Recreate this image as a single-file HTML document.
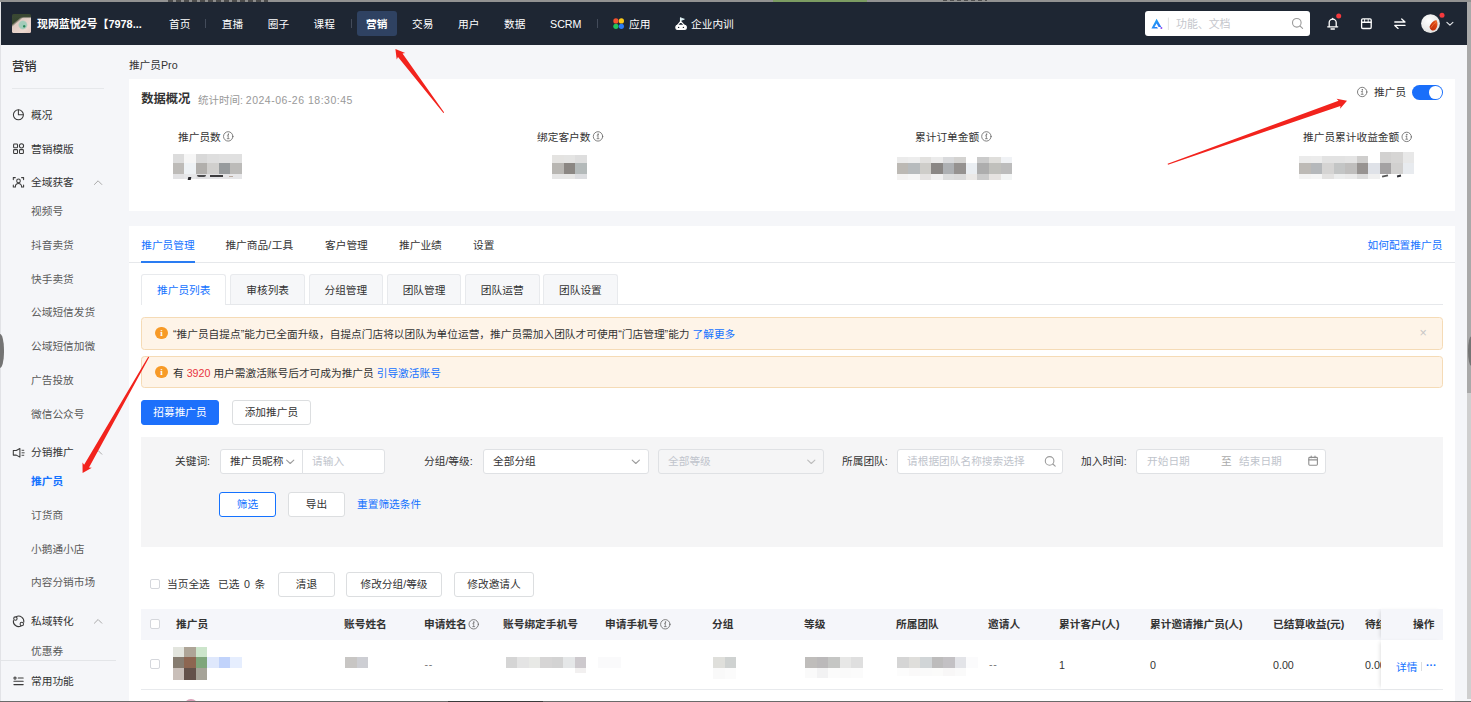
<!DOCTYPE html>
<html lang="zh-CN">
<head>
<meta charset="utf-8">
<title>推广员Pro</title>
<style>
*{box-sizing:border-box;margin:0;padding:0}
html,body{width:1471px;height:702px;overflow:hidden}
body{position:relative;background:#f5f6f9;font-family:"Liberation Sans","Noto Sans CJK SC",sans-serif;font-size:10.7px;color:#333;line-height:1}
.abs{position:absolute}
.t{position:absolute;white-space:nowrap;line-height:14px;height:14px}
/* outer frame */
#frameTop{left:0;top:0;width:1471px;height:2.4px;background:#929292}
#frameBot{left:0;top:700.5px;width:1471px;height:2px;background:#6a6a6a}
#frameR1{left:1467px;top:2px;width:4px;height:391px;background:#a9a9a9}
#frameR2{left:1467px;top:393px;width:4px;height:306px;background:#cfcfcf}
#frameL{left:0;top:2px;width:1.1px;height:699px;background:#e2e3e7}
.knob{border-radius:50%;background:#747474}
/* header */
#hdr{left:1px;top:2px;width:1466px;height:42.7px;background:#1e2633}
#hdr .t{color:#fff;top:14.5px}
.vdiv{position:absolute;top:16.8px;width:1px;height:9px;background:#434b5a}
#act{left:356px;top:9.4px;width:40px;height:24.4px;border-radius:3px;background:#2f4262}
#search{left:1144px;top:9px;width:165px;height:25px;border-radius:3px;background:#fff}
/* sidebar */
#side .t{left:31px;color:#5a5a5a}
#side .t.h{color:#333}
#side .t.blue,.btn.blue,.stab.blue{color:#1472ff}
/* cards */
.card{position:absolute;background:#fff}
.blue,.btn.blue,.stab.blue{color:#1472ff}
.lbl{color:#333}
.inp{position:absolute;height:24.4px;background:#fff;border:1px solid #dfe1e4;border-radius:3px}
.ph{color:#c0c4cc}
.btn{position:absolute;height:24.6px;border:1px solid #dcdee0;border-radius:3px;background:#fff;text-align:center;line-height:23px;color:#333}
.stab{position:absolute;top:274.4px;height:30px;width:74.7px;background:#f6f7f9;border:1px solid #e8eaed;border-bottom:none;border-radius:3px 3px 0 0;text-align:center;line-height:30px;color:#333}
.alert{position:absolute;left:141.2px;width:1301.8px;height:32.4px;background:#fef4e8;border:1px solid #f5dbb6;border-radius:3.5px}
.ico-w{position:absolute;width:12.4px;height:12.4px;border-radius:50%;background:#f79a27;color:#fff;font-size:9px;font-weight:bold;text-align:center;line-height:12.4px;font-family:"Liberation Serif",serif}
.cb{position:absolute;width:10px;height:10px;border:1px solid #d5d7dc;border-radius:2px;background:#fff}
.th{font-weight:bold;color:#333}
.mz{position:absolute}
</style>
</head>
<body>

<!-- ===== HEADER ===== -->
<div id="hdr" class="abs">
  <div class="abs" id="logo" style="left:10.9px;top:11.9px;width:19.2px;height:19.2px;border-radius:1.5px;background:radial-gradient(circle at 12.2px 12.3px,#23804f 0,#2a8556 0.7px,rgba(42,133,86,0) 1.7px),radial-gradient(circle at 10.9px 11px,#9fcbb8 0,#a5cdbb 3.6px,rgba(165,205,187,0) 4.9px),linear-gradient(180deg,#39472f 0,#3a4834 13%,rgba(58,72,52,0) 24%),linear-gradient(140deg,#3b4936 0%,#37462f 29%,#dfcbc2 38%,#ecd9d1 75%,#e2c6bd 100%)"></div>
  <div class="t" style="left:36px;font-weight:bold;font-size:10.9px">现网蓝悦2号【7978...</div>
  <div class="t" style="left:168px">首页</div>
  <div class="vdiv" style="left:204.4px"></div>
  <div class="t" style="left:220.7px">直播</div>
  <div class="t" style="left:266.7px">圈子</div>
  <div class="t" style="left:312.5px">课程</div>
  <div class="vdiv" style="left:349.5px"></div>
  <div class="abs" id="act"></div>
  <div class="t" style="left:365px;font-weight:bold">营销</div>
  <div class="t" style="left:411px">交易</div>
  <div class="t" style="left:457px">用户</div>
  <div class="t" style="left:503px">数据</div>
  <div class="t" style="left:549px">SCRM</div>
  <div class="vdiv" style="left:595.5px"></div>
  <div class="t" style="left:628px">应用</div>
  <div class="t" style="left:690px">企业内训</div>
  <div class="abs" id="search"></div>
  <div class="t" style="left:1175px;top:14.5px;color:#c4c6cc;font-size:10.9px">功能、文档</div>
</div>

<!-- ===== SIDEBAR ===== -->
<div id="side">
  <div class="t h" style="left:12px;top:59.4px;font-size:12.3px;font-weight:500;line-height:16px;height:16px">营销</div>
  <div class="abs" style="left:12px;top:88px;width:92px;height:1px;background:#e6e8eb"></div>
  <div class="t h" style="top:108px">概况</div>
  <div class="t h" style="top:142px">营销模版</div>
  <div class="t h" style="top:175px">全域获客</div>
  <div class="t" style="top:204px">视频号</div>
  <div class="t" style="top:238px">抖音卖货</div>
  <div class="t" style="top:272px">快手卖货</div>
  <div class="t" style="top:305px">公域短信发货</div>
  <div class="t" style="top:339px">公域短信加微</div>
  <div class="t" style="top:373px">广告投放</div>
  <div class="t" style="top:407px">微信公众号</div>
  <div class="t h" style="top:445px">分销推广</div>
  <div class="t blue" style="top:474px;font-weight:bold">推广员</div>
  <div class="t" style="top:508px">订货商</div>
  <div class="t" style="top:542px">小鹅通小店</div>
  <div class="t" style="top:575px">内容分销市场</div>
  <div class="t h" style="top:614px">私域转化</div>
  <div class="t" style="top:643.7px">优惠券</div>
  <div class="abs" style="left:0;top:659.6px;width:116px;height:43px;background:#f5f6f9;border-top:1px solid #e3e5e8"></div>
  <div class="t h" style="top:674px">常用功能</div>
</div>

<!-- ===== MAIN ===== -->
<div class="t" style="left:128.9px;top:58px;color:#333">推广员Pro</div>

<div class="card" id="card1" style="left:129.2px;top:78.7px;width:1325.8px;height:131.9px"></div>
<div class="t" style="left:141.2px;top:92.4px;font-size:12.3px;font-weight:bold;color:#333">数据概况</div>
<div class="t" style="left:198px;top:92.8px;color:#999;font-size:10.5px">统计时间: <span style="letter-spacing:.5px">2024-06-26 18:30:45</span></div>
<div class="t" style="left:178px;top:129.6px">推广员数</div>
<div class="t" style="left:537px;top:129.6px">绑定客户数</div>
<div class="t" style="left:915px;top:129.6px">累计订单金额</div>
<div class="t" style="left:1303px;top:129.6px">推广员累计收益金额</div>
<div class="t" style="left:1374px;top:85.4px;color:#333">推广员</div>
<div class="abs" id="sw" style="left:1412px;top:84.8px;width:31.2px;height:15.4px;border-radius:8px;background:#1a6ffa"><div class="abs" style="right:1.5px;top:1.4px;width:12.6px;height:12.6px;border-radius:50%;background:#fff"></div></div>

<div class="card" id="card2" style="left:129.2px;top:225.9px;width:1325.8px;height:476px"></div>
<div class="abs" style="left:129.2px;top:262px;width:1325.8px;height:1px;background:#e6e8eb"></div>
<div class="t blue" style="left:141.2px;top:237.6px">推广员管理</div>
<div class="abs" style="left:141.2px;top:261px;width:53.8px;height:2px;background:#2a7cf2"></div>
<div class="t" style="left:225.4px;top:237.6px">推广商品<span style="letter-spacing:.6px">/</span>工具</div>
<div class="t" style="left:325px;top:237.6px">客户管理</div>
<div class="t" style="left:399px;top:237.6px">推广业绩</div>
<div class="t" style="left:473px;top:237.6px">设置</div>
<div class="t blue" style="left:1367.5px;top:237.5px">如何配置推广员</div>

<div class="abs" style="left:141.2px;top:304px;width:1301.8px;height:1px;background:#e6e8eb"></div>
<div class="stab blue" style="left:141.2px;width:85.2px;background:#fff;height:31px">推广员列表</div>
<div class="stab" style="left:230.3px">审核列表</div>
<div class="stab" style="left:308.5px">分组管理</div>
<div class="stab" style="left:386.7px">团队管理</div>
<div class="stab" style="left:464.9px">团队运营</div>
<div class="stab" style="left:543.1px">团队设置</div>

<div class="alert" style="top:317.2px;height:32.6px"></div>
<div class="ico-w" style="left:155.4px;top:326.8px">i</div>
<div class="t" style="left:173px;top:327px">“推广员自提点”能力已全面升级，自提点门店将以团队为单位运营，推广员需加入团队才可使用“门店管理”能力 <span class="blue">了解更多</span></div>
<div class="t" style="left:1419.6px;top:326px;color:#c6c6c6;font-size:12.5px">×</div>
<div class="alert" style="top:356px"></div>
<div class="ico-w" style="left:155.4px;top:365.6px">i</div>
<div class="t" style="left:173px;top:366px">有 <span style="color:#e8353e">3920</span> 用户需激活账号后才可成为推广员 <span class="blue">引导激活账号</span></div>

<div class="btn" style="left:141.2px;top:400px;width:77.6px;background:#1d70fb;border-color:#1d70fb;color:#fff">招募推广员</div>
<div class="btn" style="left:231.8px;top:400px;width:79.2px">添加推广员</div>

<div class="abs" id="filter" style="left:141.2px;top:436.8px;width:1301.8px;height:110.4px;background:#f5f5f6"></div>
<div class="t lbl" style="left:175px;top:454px">关键词:</div>
<div class="inp" style="left:219.6px;top:449.4px;width:83px;border-radius:3px 0 0 3px"></div>
<div class="t" style="left:230px;top:454px">推广员昵称</div>
<div class="inp" style="left:302px;top:449.4px;width:83px;border-radius:0 3px 3px 0"></div>
<div class="t ph" style="left:312px;top:454px">请输入</div>
<div class="t lbl" style="left:424px;top:454px">分组/等级:</div>
<div class="inp" style="left:483px;top:449.4px;width:166px"></div>
<div class="t" style="left:493px;top:454px">全部分组</div>
<div class="inp" style="left:658px;top:449.4px;width:166px;background:#f5f5f6"></div>
<div class="t ph" style="left:668px;top:454px">全部等级</div>
<div class="t lbl" style="left:842px;top:454px">所属团队:</div>
<div class="inp" style="left:897px;top:449.4px;width:166px"></div>
<div class="t ph" style="left:907px;top:454px">请根据团队名称搜索选择</div>
<div class="t lbl" style="left:1081px;top:454px">加入时间:</div>
<div class="inp" style="left:1136px;top:449.4px;width:190px"></div>
<div class="t ph" style="left:1147px;top:454px">开始日期</div>
<div class="t ph" style="left:1221px;top:454px;color:#aaa">至</div>
<div class="t ph" style="left:1239px;top:454px">结束日期</div>

<div class="btn blue" style="left:219px;top:492px;width:57px;border-color:#1472ff">筛选</div>
<div class="btn" style="left:288px;top:492px;width:57px">导出</div>
<div class="t blue" style="left:357px;top:497px">重置筛选条件</div>

<div class="cb" style="left:150px;top:579px"></div>
<div class="t" style="left:167px;top:577px">当页全选</div>
<div class="t" style="left:218px;top:577px;word-spacing:1.6px">已选 0 条</div>
<div class="btn" style="left:278px;top:572px;width:57px">清退</div>
<div class="btn" style="left:346px;top:572px;width:96px">修改分组/等级</div>
<div class="btn" style="left:454px;top:572px;width:80px">修改邀请人</div>

<div class="abs" id="thead" style="left:141.2px;top:608.6px;width:1301.8px;height:31.4px;background:#f5f6fa"></div>
<div class="cb" style="left:150px;top:619px"></div>
<div class="t th" style="left:176px;top:617px">推广员</div>
<div class="t th" style="left:344px;top:617px">账号姓名</div>
<div class="t th" style="left:424px;top:617px">申请姓名</div>
<div class="t th" style="left:503px;top:617px">账号绑定手机号</div>
<div class="t th" style="left:605px;top:617px">申请手机号</div>
<div class="t th" style="left:712px;top:617px">分组</div>
<div class="t th" style="left:804px;top:617px">等级</div>
<div class="t th" style="left:896px;top:617px">所属团队</div>
<div class="t th" style="left:988px;top:617px">邀请人</div>
<div class="t th" style="left:1059px;top:617px">累计客户(人)</div>
<div class="t th" style="left:1150px;top:617px">累计邀请推广员(人)</div>
<div class="t th" style="left:1273px;top:617px">已结算收益(元)</div>
<div class="t th" style="left:1365px;top:617px">待结</div>
<div class="abs" style="left:141.2px;top:688.8px;width:1301.8px;height:1px;background:#e8eaed"></div>
<div class="cb" style="left:150px;top:659px"></div>
<div class="t" style="left:424.5px;top:656.6px;color:#777;letter-spacing:.8px">--</div>
<div class="t" style="left:989px;top:656.6px;color:#777;letter-spacing:.8px">--</div>
<div class="t" style="left:1059px;top:657.6px">1</div>
<div class="t" style="left:1150px;top:657.6px">0</div>
<div class="t" style="left:1273px;top:657.6px">0.00</div>
<div class="t" style="left:1365px;top:657.6px">0.00</div>
<!-- fixed col -->
<div class="abs" style="left:1381px;top:609px;width:62px;height:31px;background:#f5f6fa;box-shadow:-3px 0 4px -2px rgba(0,0,0,.12)"></div>
<div class="abs" style="left:1381px;top:640px;width:62px;height:49px;background:#fff;box-shadow:-3px 0 4px -2px rgba(0,0,0,.12)"></div>
<div class="t th" style="left:1413px;top:617px">操作</div>
<div class="t blue" style="left:1396px;top:660px">详情</div>
<div class="abs" style="left:1421px;top:662px;width:1px;height:9px;background:#dcdee0"></div>
<div class="t blue" style="left:1426px;top:658px;font-weight:bold">···</div>

<i class="mz" style="left:172.8px;top:154.2px;width:11.7px;height:8.8px;background:#dcdcdc"></i>
<i class="mz" style="left:184.3px;top:154.2px;width:11.7px;height:8.8px;background:#f6f6f6"></i>
<i class="mz" style="left:195.7px;top:154.2px;width:11.7px;height:8.8px;background:#d8d8d8"></i>
<i class="mz" style="left:207.2px;top:154.2px;width:11.7px;height:8.8px;background:#dedede"></i>
<i class="mz" style="left:218.7px;top:154.2px;width:11.7px;height:8.8px;background:#e0e0e0"></i>
<i class="mz" style="left:230.2px;top:154.2px;width:11.7px;height:8.8px;background:#e0e0e0"></i>
<i class="mz" style="left:172.8px;top:162.8px;width:11.7px;height:11.6px;background:#bdbbb8"></i>
<i class="mz" style="left:184.3px;top:162.8px;width:11.7px;height:11.6px;background:#eef2f5"></i>
<i class="mz" style="left:195.7px;top:162.8px;width:11.7px;height:11.6px;background:#b1afac"></i>
<i class="mz" style="left:207.2px;top:162.8px;width:11.7px;height:11.6px;background:#d0cfcd"></i>
<i class="mz" style="left:218.7px;top:162.8px;width:11.7px;height:11.6px;background:#979b9d"></i>
<i class="mz" style="left:230.2px;top:162.8px;width:11.7px;height:11.6px;background:#bcbbb9"></i>
<i class="mz" style="left:172.8px;top:174.2px;width:11.7px;height:4.5px;background:#e2e2e4"></i>
<i class="mz" style="left:184.3px;top:174.2px;width:11.7px;height:4.5px;background:#e6e7e9"></i>
<i class="mz" style="left:195.7px;top:174.2px;width:11.7px;height:4.5px;background:#e0e0e2"></i>
<i class="mz" style="left:207.2px;top:174.2px;width:11.7px;height:4.5px;background:#e2e2e4"></i>
<i class="mz" style="left:218.7px;top:174.2px;width:11.7px;height:4.5px;background:#e4e4e6"></i>
<i class="mz" style="left:230.2px;top:174.2px;width:11.7px;height:4.5px;background:#e6e6e8"></i>
<i class="mz" style="left:552.1px;top:154.6px;width:11.7px;height:8.4px;background:#e4e3e1"></i>
<i class="mz" style="left:563.6px;top:154.6px;width:11.7px;height:8.4px;background:#e4e4e3"></i>
<i class="mz" style="left:575.1px;top:154.6px;width:11.7px;height:8.4px;background:#dedede"></i>
<i class="mz" style="left:552.1px;top:162.8px;width:11.7px;height:11.2px;background:#b8b6b2"></i>
<i class="mz" style="left:563.6px;top:162.8px;width:11.7px;height:11.2px;background:#8b8783"></i>
<i class="mz" style="left:575.1px;top:162.8px;width:11.7px;height:11.2px;background:#b4baba"></i>
<i class="mz" style="left:552.1px;top:173.8px;width:11.7px;height:5.2px;background:#e6e6e6"></i>
<i class="mz" style="left:563.6px;top:173.8px;width:11.7px;height:5.2px;background:#e6e6e5"></i>
<i class="mz" style="left:575.1px;top:173.8px;width:11.7px;height:5.2px;background:#dcdde0"></i>
<i class="mz" style="left:896.8px;top:157.3px;width:11.7px;height:5.5px;background:#ebebeb"></i>
<i class="mz" style="left:908.3px;top:157.3px;width:11.7px;height:5.5px;background:#ededed"></i>
<i class="mz" style="left:919.8px;top:157.3px;width:11.7px;height:5.5px;background:#e2e1df"></i>
<i class="mz" style="left:931.4px;top:157.3px;width:11.7px;height:5.5px;background:#ebebeb"></i>
<i class="mz" style="left:942.9px;top:157.3px;width:11.7px;height:5.5px;background:#d9dadc"></i>
<i class="mz" style="left:954.4px;top:157.3px;width:11.7px;height:5.5px;background:#d4d3d1"></i>
<i class="mz" style="left:977.4px;top:157.3px;width:11.7px;height:5.5px;background:#cbcbcb"></i>
<i class="mz" style="left:989.0px;top:157.3px;width:11.7px;height:5.5px;background:#dfdedb"></i>
<i class="mz" style="left:1000.5px;top:157.3px;width:11.7px;height:5.5px;background:#f0f2f5"></i>
<i class="mz" style="left:896.8px;top:162.6px;width:11.7px;height:11.2px;background:#bcb9b4"></i>
<i class="mz" style="left:908.3px;top:162.6px;width:11.7px;height:11.2px;background:#b7bbbd"></i>
<i class="mz" style="left:919.8px;top:162.6px;width:11.7px;height:11.2px;background:#cecdc9"></i>
<i class="mz" style="left:931.4px;top:162.6px;width:11.7px;height:11.2px;background:#8a8785"></i>
<i class="mz" style="left:942.9px;top:162.6px;width:11.7px;height:11.2px;background:#adb0b3"></i>
<i class="mz" style="left:954.4px;top:162.6px;width:11.7px;height:11.2px;background:#959290"></i>
<i class="mz" style="left:965.9px;top:162.6px;width:11.7px;height:11.2px;background:#eaeef2"></i>
<i class="mz" style="left:977.4px;top:162.6px;width:11.7px;height:11.2px;background:#adadad"></i>
<i class="mz" style="left:989.0px;top:162.6px;width:11.7px;height:11.2px;background:#c0c0bc"></i>
<i class="mz" style="left:1000.5px;top:162.6px;width:11.7px;height:11.2px;background:#bcbcbc"></i>
<i class="mz" style="left:896.8px;top:173.6px;width:11.7px;height:6.9px;background:#f4f3f2"></i>
<i class="mz" style="left:908.3px;top:173.6px;width:11.7px;height:6.9px;background:#f6f6f6"></i>
<i class="mz" style="left:919.8px;top:173.6px;width:11.7px;height:6.9px;background:#e5e3e2"></i>
<i class="mz" style="left:931.4px;top:173.6px;width:11.7px;height:6.9px;background:#f0f0f0"></i>
<i class="mz" style="left:942.9px;top:173.6px;width:11.7px;height:6.9px;background:#dcdddd"></i>
<i class="mz" style="left:954.4px;top:173.6px;width:11.7px;height:6.9px;background:#dadada"></i>
<i class="mz" style="left:965.9px;top:173.6px;width:11.7px;height:6.9px;background:#ebe9e7"></i>
<i class="mz" style="left:977.4px;top:173.6px;width:11.7px;height:6.9px;background:#cbcbcb"></i>
<i class="mz" style="left:989.0px;top:173.6px;width:11.7px;height:6.9px;background:#e6e3e1"></i>
<i class="mz" style="left:1000.5px;top:173.6px;width:11.7px;height:6.9px;background:#f3f5f5"></i>
<i class="mz" style="left:1299.2px;top:155.8px;width:11.7px;height:7.0px;background:#ebebeb"></i>
<i class="mz" style="left:1310.7px;top:155.8px;width:11.7px;height:7.0px;background:#ececec"></i>
<i class="mz" style="left:1322.2px;top:155.8px;width:11.7px;height:7.0px;background:#e2e2e2"></i>
<i class="mz" style="left:1333.7px;top:155.8px;width:11.7px;height:7.0px;background:#e2e2e2"></i>
<i class="mz" style="left:1345.2px;top:155.8px;width:11.7px;height:7.0px;background:#e4e4e4"></i>
<i class="mz" style="left:1356.7px;top:155.8px;width:11.7px;height:7.0px;background:#cfcecd"></i>
<i class="mz" style="left:1299.2px;top:162.6px;width:11.7px;height:11.2px;background:#bdbab6"></i>
<i class="mz" style="left:1310.7px;top:162.6px;width:11.7px;height:11.2px;background:#b5b8bb"></i>
<i class="mz" style="left:1322.2px;top:162.6px;width:11.7px;height:11.2px;background:#d5d4d3"></i>
<i class="mz" style="left:1333.7px;top:162.6px;width:11.7px;height:11.2px;background:#c3c5c5"></i>
<i class="mz" style="left:1345.2px;top:162.6px;width:11.7px;height:11.2px;background:#bfbebd"></i>
<i class="mz" style="left:1356.7px;top:162.6px;width:11.7px;height:11.2px;background:#979391"></i>
<i class="mz" style="left:1368.2px;top:162.6px;width:11.7px;height:11.2px;background:#dfe2e8"></i>
<i class="mz" style="left:1379.7px;top:162.6px;width:11.7px;height:11.2px;background:#a4a2a3"></i>
<i class="mz" style="left:1391.2px;top:162.6px;width:11.7px;height:11.2px;background:#d1d0cf"></i>
<i class="mz" style="left:1402.7px;top:162.6px;width:11.7px;height:11.2px;background:#e8ebef"></i>
<i class="mz" style="left:1299.2px;top:173.6px;width:11.7px;height:5.3px;background:#f3f3f3"></i>
<i class="mz" style="left:1310.7px;top:173.6px;width:11.7px;height:5.3px;background:#f5f5f5"></i>
<i class="mz" style="left:1322.2px;top:173.6px;width:11.7px;height:5.3px;background:#e3e2e1"></i>
<i class="mz" style="left:1333.7px;top:173.6px;width:11.7px;height:5.3px;background:#eceded"></i>
<i class="mz" style="left:1345.2px;top:173.6px;width:11.7px;height:5.3px;background:#eaeaea"></i>
<i class="mz" style="left:1356.7px;top:173.6px;width:11.7px;height:5.3px;background:#dcdcdc"></i>
<i class="mz" style="left:1368.2px;top:173.6px;width:11.7px;height:5.3px;background:#f0f0f0"></i>
<i class="mz" style="left:1379.7px;top:152.0px;width:11.7px;height:10.8px;background:#d2d1d0"></i>
<i class="mz" style="left:1391.2px;top:152.0px;width:11.7px;height:10.8px;background:#d6d5d4"></i>
<i class="mz" style="left:1402.7px;top:152.0px;width:11.7px;height:10.8px;background:#e8e8e8"></i>
<i class="mz" style="left:172.7px;top:647.1px;width:11.7px;height:10.2px;background:#e3e5de"></i>
<i class="mz" style="left:184.2px;top:647.1px;width:11.7px;height:10.2px;background:#aea597"></i>
<i class="mz" style="left:195.7px;top:647.1px;width:11.3px;height:10.2px;background:#cce5cb"></i>
<i class="mz" style="left:172.7px;top:657.1px;width:11.7px;height:11.4px;background:#867c70"></i>
<i class="mz" style="left:184.2px;top:657.1px;width:11.7px;height:11.4px;background:#8d6651"></i>
<i class="mz" style="left:195.7px;top:657.1px;width:11.3px;height:11.4px;background:#7fa67b"></i>
<i class="mz" style="left:206.8px;top:657.1px;width:12.0px;height:11.4px;background:#dfe8fc"></i>
<i class="mz" style="left:218.6px;top:657.1px;width:11.7px;height:11.4px;background:#c1d3fb"></i>
<i class="mz" style="left:230.1px;top:657.1px;width:11.7px;height:11.4px;background:#e6eefe"></i>
<i class="mz" style="left:172.7px;top:668.3px;width:11.7px;height:11.7px;background:#c9bfb9"></i>
<i class="mz" style="left:184.2px;top:668.3px;width:11.7px;height:11.7px;background:#63514a"></i>
<i class="mz" style="left:195.7px;top:668.3px;width:11.3px;height:11.7px;background:#a6a398"></i>
<i class="mz" style="left:345.0px;top:657.1px;width:11.7px;height:11.4px;background:#c8c6c4"></i>
<i class="mz" style="left:356.5px;top:657.1px;width:11.7px;height:11.4px;background:#cdced3"></i>
<i class="mz" style="left:505.9px;top:657.1px;width:11.7px;height:11.4px;background:#d5d5d5"></i>
<i class="mz" style="left:517.4px;top:657.1px;width:11.7px;height:11.4px;background:#e4e4e4"></i>
<i class="mz" style="left:528.9px;top:657.1px;width:11.7px;height:11.4px;background:#e8e9e6"></i>
<i class="mz" style="left:540.4px;top:657.1px;width:11.7px;height:11.4px;background:#d6d5d5"></i>
<i class="mz" style="left:551.9px;top:657.1px;width:11.7px;height:11.4px;background:#d3d3d3"></i>
<i class="mz" style="left:563.4px;top:657.1px;width:11.7px;height:11.4px;background:#e5e7e8"></i>
<i class="mz" style="left:574.8px;top:657.1px;width:11.7px;height:11.4px;background:#cdc9cd"></i>
<i class="mz" style="left:574.8px;top:668.3px;width:11.7px;height:4.9px;background:#f2f0f0"></i>
<i class="mz" style="left:597.8px;top:657.1px;width:11.7px;height:11.4px;background:#fafafb"></i>
<i class="mz" style="left:609.3px;top:657.1px;width:11.7px;height:11.4px;background:#fafafb"></i>
<i class="mz" style="left:713.0px;top:657.1px;width:11.7px;height:11.4px;background:#dfdfdb"></i>
<i class="mz" style="left:724.5px;top:657.1px;width:11.7px;height:11.4px;background:#cfd2d1"></i>
<i class="mz" style="left:713.0px;top:668.3px;width:11.7px;height:10.9px;background:#f9f9f9"></i>
<i class="mz" style="left:724.5px;top:668.3px;width:11.7px;height:10.9px;background:#fbfbfb"></i>
<i class="mz" style="left:805.1px;top:657.1px;width:11.7px;height:11.4px;background:#bfbdbb"></i>
<i class="mz" style="left:816.6px;top:657.1px;width:11.7px;height:11.4px;background:#bbb9ba"></i>
<i class="mz" style="left:828.1px;top:657.1px;width:11.7px;height:11.4px;background:#c5c6c4"></i>
<i class="mz" style="left:839.5px;top:657.1px;width:11.7px;height:11.4px;background:#e7e7e6"></i>
<i class="mz" style="left:851.0px;top:657.1px;width:11.7px;height:11.4px;background:#dfdfdf"></i>
<i class="mz" style="left:805.1px;top:668.3px;width:11.7px;height:9.9px;background:#fafafa"></i>
<i class="mz" style="left:816.6px;top:668.3px;width:11.7px;height:9.9px;background:#f2f2f3"></i>
<i class="mz" style="left:828.1px;top:668.3px;width:11.7px;height:9.9px;background:#fbfbfb"></i>
<i class="mz" style="left:839.5px;top:668.3px;width:11.7px;height:9.9px;background:#fafafa"></i>
<i class="mz" style="left:851.0px;top:668.3px;width:11.7px;height:9.9px;background:#fbfbfb"></i>
<i class="mz" style="left:897.0px;top:657.1px;width:11.7px;height:11.4px;background:#d5d5d5"></i>
<i class="mz" style="left:908.5px;top:657.1px;width:11.7px;height:11.4px;background:#dfdedb"></i>
<i class="mz" style="left:920.0px;top:657.1px;width:11.7px;height:11.4px;background:#d1d5d7"></i>
<i class="mz" style="left:931.5px;top:657.1px;width:11.7px;height:11.4px;background:#bdbcbc"></i>
<i class="mz" style="left:943.0px;top:657.1px;width:11.7px;height:11.4px;background:#c3c1c4"></i>
<i class="mz" style="left:954.5px;top:657.1px;width:11.7px;height:11.4px;background:#e3e4e8"></i>
<i class="mz" style="left:966.0px;top:657.1px;width:11.7px;height:11.4px;background:#fbfbfc"></i>
<i class="mz" style="left:897.0px;top:668.3px;width:11.7px;height:7.9px;background:#fcfcfc"></i>
<i class="mz" style="left:908.5px;top:668.3px;width:11.7px;height:7.9px;background:#faf9f9"></i>
<i class="mz" style="left:920.0px;top:668.3px;width:11.7px;height:7.9px;background:#fafafa"></i>
<i class="mz" style="left:931.5px;top:668.3px;width:11.7px;height:7.9px;background:#fbfbfa"></i>
<i class="mz" style="left:943.0px;top:668.3px;width:11.7px;height:7.9px;background:#f8f7f7"></i>
<i class="mz" style="left:954.5px;top:668.3px;width:11.7px;height:7.9px;background:#fafafa"></i>
<i class="mz" style="left:187.8px;top:176.8px;width:3px;height:3px;background:#26262b;transform:skewX(-12deg)"></i>
<i class="mz" style="left:196.5px;top:175.4px;width:9px;height:1.6px;background:#4a4a4c;border-radius:0 0 2px 2px"></i>
<i class="mz" style="left:210.3px;top:175.3px;width:12.3px;height:1.6px;background:#3c3c3e"></i>
<i class="mz" style="left:228.6px;top:176.2px;width:4px;height:1.2px;background:#b9aaa0"></i>
<i class="mz" style="left:1382px;top:175px;width:6px;height:1.6px;background:#555;transform:rotate(-12deg)"></i>
<i class="mz" style="left:1397px;top:174.8px;width:4px;height:1.8px;background:#2e2e33;transform:rotate(-12deg)"></i>
<i class="mz" style="left:183.8px;top:699px;width:14.5px;height:14.5px;border-radius:50%;background:#d9a1b8"></i>
<svg class="abs" id="icons" style="left:0;top:0" width="1471" height="702" fill="none" stroke-linecap="round" stroke-linejoin="round">
<defs>
<linearGradient id="lg1" x1="0" y1="0" x2="1" y2="1"><stop offset="0" stop-color="#19b5f5"/><stop offset="1" stop-color="#2f6af6"/></linearGradient>
<radialGradient id="av" cx="0.4" cy="0.35" r="0.8"><stop offset="0" stop-color="#ffffff"/><stop offset="1" stop-color="#dcdcda"/></radialGradient>
<g id="inf"><circle cx="0" cy="0" r="4.7"/><path d="M0 -0.6v2.8M-0.9 -0.6h0.9M-1 2.3h2" stroke-width="0.7"/><circle cx="0" cy="-2.2" r="0.3" /></g>
<linearGradient id="leaf" x1="0" y1="1" x2="1" y2="0"><stop offset="0" stop-color="#b92a08"/><stop offset="0.6" stop-color="#d8400f"/><stop offset="1" stop-color="#ee7a35"/></linearGradient>
</defs>
<!-- app dots -->
<g stroke="none">
<circle cx="615.9" cy="20.9" r="2.6" fill="#f4502e"/><circle cx="621.4" cy="20.9" r="2.6" fill="#fbc918"/>
<circle cx="615.9" cy="26.3" r="2.6" fill="#1fc45c"/><circle cx="621.4" cy="26.3" r="2.6" fill="#2a7af6"/>
</g>
<!-- train icon -->
<g stroke="#fff" stroke-width="1.2">
<path d="M680.6 18v3.2"/><path d="M680.8 17.9l3.6 1.3-3.6 1.3z" fill="#dff3f6" stroke="#dff3f6" stroke-width="0.8"/>
<path d="M677.2 25.6 L680.7 21.4 L684.6 25.6"/>
<rect x="675.9" y="25.3" width="10.4" height="4.2" rx="1.9" fill="#fff"/>
<circle cx="678.6" cy="27.4" r="0.7" fill="#1e2633" stroke="none"/><circle cx="683.4" cy="27.4" r="0.7" fill="#1e2633" stroke="none"/>
</g>
<!-- search logo -->
<path d="M1156.6 18.8 L1161.3 27 L1158.6 27 L1156.6 23.4 L1154.5 27 L1157 27 L1158 28.6 L1151.4 28.6 Z" fill="url(#lg1)" stroke="none"/>
<circle cx="1161.4" cy="27.9" r="1" fill="#8a4df5" stroke="none"/>
<path d="M1168.4 18v11.5" stroke="#e3e3e3" stroke-width="1"/>
<!-- magnifier -->
<g stroke="#9a9a9a" stroke-width="1.1"><circle cx="1296.8" cy="22.8" r="4.3"/><path d="M1300 26l2.6 2.3"/></g>
<!-- bell -->
<g stroke="#fff" stroke-width="1.3">
<path d="M1329.2 26.6V22.6a3.5 3.5 0 0 1 7 0V26.6"/><path d="M1327.7 26.8H1337.7"/><path d="M1331 29H1334.4"/><path d="M1332.7 18.3V19"/>
</g>
<circle cx="1338.7" cy="16.1" r="2.5" fill="#f5393d" stroke="none"/>
<!-- store -->
<g stroke="#fff" stroke-width="1.3">
<rect x="1361.6" y="18.9" width="9.6" height="9.6" rx="1.2"/>
<path d="M1361.8 22.3H1371" stroke-width="1.5"/><path d="M1364.6 19.4v2.5M1368.2 19.4v2.5" stroke-width="0.9"/>
</g>
<!-- swap -->
<g stroke="#fff" stroke-width="1.3">
<path d="M1394.8 22H1405l-3.3-3"/><path d="M1405 25.4H1394.8l3.3 3"/>
</g>
<!-- avatar -->
<circle cx="1430.5" cy="23.6" r="9.4" fill="url(#av)" stroke="none"/>
<path d="M1429.6 26.5c1.2-3.6 3.8-5.8 6.8-6.6 1.8 2.6 1.4 6.6-.6 9.4-1.6 1.6-3.4 1.6-4.8.4-.8-.9-1.4-1.9-1.4-3.2z" fill="url(#leaf)" stroke="none"/>
<path d="M1431 27.5c1.6-2.4 3.2-4.2 5-5.6" stroke="#f08a4a" stroke-width="0.7"/>
<circle cx="1442" cy="15.3" r="2.5" fill="#f5393d" stroke="none"/>
<path d="M1446.9 22.3l3 2.9 3-2.9" stroke="#e2e4e8" stroke-width="1.15"/>

<!-- sidebar icons -->
<g stroke="#3a3a3a" stroke-width="1.05">
<circle cx="18.4" cy="114.8" r="5"/><path d="M18.4 110v4.8h4.8"/>
<rect x="13.6" y="149.6" width="3.9" height="3.9" rx="0.8"/><rect x="19.5" y="149.6" width="3.9" height="3.9" rx="0.8"/><rect x="13.6" y="143.9" width="3.9" height="3.9" rx="0.8"/><circle cx="21.5" cy="145.8" r="2.1"/>
<path d="M13.3 179.6v-2h2M21.6 177.6h2v2M23.6 185v2h-2M15.3 187h-2v-2"/><circle cx="18.5" cy="180.9" r="1.8"/><path d="M15.4 186.6a3.1 3.1 0 0 1 6.2 0"/>
<path d="M13.3 450.5h3l3.6-2v8.6l-3.6-2h-3z"/><path d="M22 450.3h1.8M22 452.8h2.2M22 455.3h1.8" stroke-width="0.9"/>
<path d="M16.2 616.6a5.3 5.3 0 0 1 7.6 5.5M21 626a5.3 5.3 0 0 1 -7.6 -5.5"/><circle cx="15.4" cy="618.6" r="1.7"/><circle cx="21.8" cy="624" r="1.7"/>
<circle cx="15" cy="678" r="1.1"/><path d="M18.2 678h5M13.9 681.3h9.3M13.9 684.6h9.3"/>
</g>
<g stroke="#aaa" stroke-width="1">
<path d="M94.4 184.5l3.7-3.7 3.7 3.7"/><path d="M94.4 454.2l3.7-3.7 3.7 3.7"/><path d="M94.4 623.2l3.7-3.7 3.7 3.7"/>
</g>

<!-- info icons -->
<use href="#inf" x="1362.2" y="92" stroke="#6a6a6a" stroke-width="0.85"/>
<use href="#inf" x="228.2" y="136.4" stroke="#6a6a6a" stroke-width="0.85"/>
<use href="#inf" x="598" y="136.4" stroke="#6a6a6a" stroke-width="0.85"/>
<use href="#inf" x="986.4" y="136.4" stroke="#6a6a6a" stroke-width="0.85"/>
<use href="#inf" x="1406.7" y="136.9" stroke="#6a6a6a" stroke-width="0.85"/>
<use href="#inf" x="473.7" y="624.3" stroke="#6a6a6a" stroke-width="0.85"/>
<use href="#inf" x="665.3" y="624.3" stroke="#6a6a6a" stroke-width="0.85"/>

<!-- form icons -->
<g stroke="#9c9c9c" stroke-width="1.1">
<path d="M286.6 460.2l3.6 3.3 3.6-3.3"/><path d="M632.2 460.2l3.6 3.3 3.6-3.3"/>
<path d="M807.7 460.2l3.6 3.3 3.6-3.3" stroke="#bcbcbc"/>
<circle cx="1049.6" cy="460.9" r="4.3"/><path d="M1052.8 464l2.4 2.2"/>
<rect x="1308.8" y="457.4" width="8.6" height="7.8" rx="0.9" stroke="#8f8f8f"/><path d="M1308.8 459.8h8.6" stroke="#8f8f8f" stroke-width="1.3"/><path d="M1311.2 456v1.8M1315 456v1.8" stroke="#8f8f8f"/>
</g>
</svg>

<svg class="abs" style="left:0;top:0" width="1471" height="702" fill="#f2231d">
<polygon points="395.4,48.9 405.2,53.0 402.5,53.6 444.2,112.4 443.4,113.0 398.0,57.0 396.7,59.4"/>
<polygon points="1347.0,100.7 1340.1,108.8 1340.4,106.0 1168.0,164.7 1167.6,163.7 1338.5,100.7 1336.6,98.8"/>
<polygon points="82.6,473.1 82.5,462.5 84.1,464.8 148.2,356.7 149.2,357.3 89.0,467.5 91.8,467.7"/>
</svg>
<!-- ===== FRAME ===== -->
<div class="abs" id="frameTop"></div>
<div class="abs" id="frameBot"></div>
<div class="abs" style="left:168px;top:0;width:100px;height:1.5px;background:repeating-linear-gradient(90deg,#3a3a3a 0,#3a3a3a 5px,#8c8c8c 5px,#8c8c8c 8px);opacity:.8"></div>
<div class="abs" style="left:773px;top:0;width:94px;height:1.7px;background:#7c9c62"></div>
<div class="abs" style="left:943px;top:0;width:44px;height:1.4px;background:repeating-linear-gradient(90deg,#404040 0,#404040 4px,#8c8c8c 4px,#8c8c8c 7px);opacity:.8"></div>
<div class="abs" style="left:448px;top:700.8px;width:95px;height:1.2px;background:#2e2e2e;opacity:.8"></div>
<div class="abs" id="frameR1"></div>
<div class="abs" id="frameR2"></div>
<div class="abs" id="frameL"></div>
<div class="abs knob" style="left:-4.3px;top:334px;width:8.6px;height:34px"></div>
<div class="abs knob" style="left:1467.6px;top:336px;width:7px;height:29.5px"></div>

</body>
</html>
